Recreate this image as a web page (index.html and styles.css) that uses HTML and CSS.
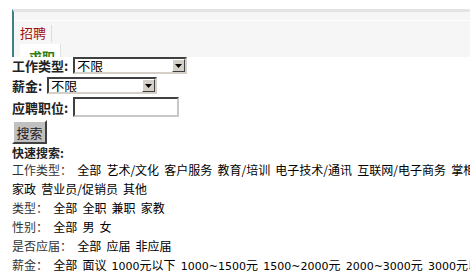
FILE: index.html
```html
<!DOCTYPE html>
<html lang="zh-CN">
<head>
  <meta charset="UTF-8" />
  <title>招聘求职</title>
  <link rel="stylesheet" href="styles.css">
</head>
<body>

<div class="page">
  <div class="tabbar">
    <div class="tabline"></div>
    <div class="tabs">
      <a class="tab hire" href="#">招聘</a>
    </div>
    <div class="tab2"><a class="tab seek" href="#">求职</a></div>
  </div>

  <form class="search">
    <div class="row">
      <label>工作类型:</label>
      <span class="sel w1"><select><option>不限</option></select><i class="arr"><svg width="7" height="4" viewBox="0 0 7 4"><path d="M0 0h7L3.5 4z" fill="#000"/></svg></i></span>
    </div>
    <div class="row">
      <label>薪金:</label>
      <span class="sel w2"><select><option>不限</option></select><i class="arr"><svg width="7" height="4" viewBox="0 0 7 4"><path d="M0 0h7L3.5 4z" fill="#000"/></svg></i></span>
    </div>
    <div class="row r3">
      <label>应聘职位:</label>
      <input type="text" class="txt">
    </div>
    <div class="row r4">
      <button type="button" class="btn">搜索</button>
    </div>
  </form>

  <div class="quick">
    <h4>快速搜索:</h4>
    <p><span class="k">工作类型：</span> 全部 艺术/文化 客户服务 教育/培训 电子技术/通讯 互联网/电子商务 掌柜/店长 家政 营业员/促销员 其他</p>
    <p><span class="k">类型：</span> 全部 全职 兼职 家教</p>
    <p><span class="k">性别：</span> 全部 男 女</p>
    <p><span class="k">是否应届：</span> 全部 应届 非应届</p>
    <p class="nowrap"><span class="k">薪金：</span> 全部 面议 <span class="n">1000</span>元以下 <span class="n">1000~1500</span>元 <span class="n">1500~2000</span>元 <span class="n">2000~3000</span>元 <span class="n">3000</span>元以上</p>
  </div>

  <div class="listbox"></div>
</div>

</body>
</html>
```

FILE: styles.css
```css
html, body { overflow: hidden; }
body { margin: 0; font-family: "Noto Sans CJK SC", sans-serif; font-size: 12px; color: #000; background: #fff; }
.page { padding: 9px 0 0 12px; width: 512px; }

/* tab bar */
.tabbar { height: 45px; border-top: 3px solid #e4e4e4; border-left: 2px solid #3f7f86; background: #f6f6f6; overflow: hidden; }
.tabline { height: 1px; background: #fff; margin-top: 8px; }
.tabs { display: flex; padding: 4px 0 0 6px; height: 17px; }
.tab { text-decoration: none; font-size: 13px; line-height: 16px; }
.hire { color: #a30f0f; padding-right: 5px; border-right: 1px solid #dcdcdc; }
.tab2 { margin: 2px 0 0 6px; width: 40px; height: 20px; background: #fff; border-right: 1px solid #e2e2e2; }
.seek { display: block; color: #2f7d12; font-weight: bold; padding: 5px 0 0 9px; }

/* search form */
.search { margin: 0; }
.row { display: flex; align-items: center; height: 17px; margin-bottom: 3px; }
.r3 { height: 20px; }
.r4 { height: 24px; margin-bottom: 0; }
.row label { font-weight: bold; font-size: 13px; color: #222; line-height: 17px; padding-right: 5px; }
.sel { display: inline-flex; height: 17px; box-sizing: border-box; border: 2px solid; border-color: #404040 #d4d0c8 #d4d0c8 #404040; background: #fff; }
.w1 { width: 114px; }
.w2 { width: 110px; }
.sel select { appearance: none; -webkit-appearance: none; flex: 1; border: 0; background: #fff; font: 13px "Noto Sans CJK SC", sans-serif; line-height: 13px; padding: 0 2px; margin: 0; outline: none; color: #000; }
.arr { width: 13px; height: 13px; box-sizing: border-box; background: #d4d0c8; border: 1px solid; border-color: #fff #404040 #404040 #fff; display: flex; align-items: center; justify-content: center; }
.txt { width: 106px; height: 20px; box-sizing: border-box; border: 2px solid; border-color: #404040 #c8c8c8 #c8c8c8 #404040; margin: 0; padding: 0; }
.btn { width: 35px; height: 24px; background: #c0c0c0; border: 2px solid; border-color: #fff #404040 #404040 #fff; font: 13px "Noto Sans CJK SC", sans-serif; color: #222; padding: 0; }

/* quick search */
.quick h4 { margin: 2px 0 0; font-size: 12px; font-weight: bold; color: #222; line-height: 14px; }
.quick p { margin: 0; line-height: 19px; word-spacing: 2.5px; word-break: keep-all; }
.quick .k { color: #333; }
.quick .n { font-family: "DejaVu Sans", sans-serif; font-size: 11px; word-spacing: 0; }
.nowrap { white-space: nowrap; }

.listbox { height: 20px; margin-top: 1px; border-top: 2px solid #6aa6b8; border-left: 2px solid #3f7f86; background: #e6f5fb; }
```
